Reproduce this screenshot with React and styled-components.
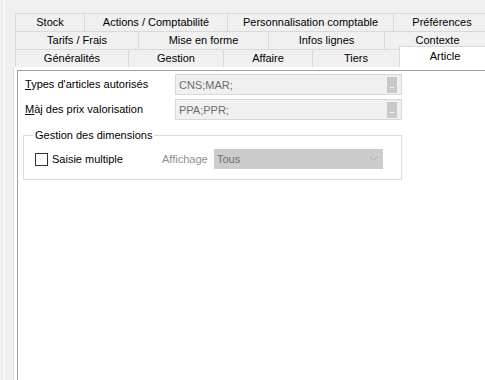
import React from "react";
import styled, { createGlobalStyle } from "styled-components";

const Global = createGlobalStyle`
  html, body { margin: 0; padding: 0; background: #f0f0f0; }
  body { font-family: "Liberation Sans", Arial, sans-serif; font-size: 11px; color: #000; }
`;

const Window = styled.div`
  width: 485px;
  height: 380px;
  overflow: hidden;
  background: #f0f0f0;
  display: flex;
  flex-direction: column;
  padding-top: 13px;
  box-sizing: border-box;
  border-left: 1px solid #f0f0f0;
  position: relative;
`;

const Splitter = styled.div`
  position: absolute;
  left: 3px;
  top: 0;
  bottom: 0;
  width: 1px;
  background: #fbfbfb;
`;

const TabStrip = styled.div`
  margin-left: 14px;
  width: 475px;
  display: flex;
  flex-direction: column;
`;

const TabRow = styled.div`
  display: flex;
  height: 18px;
  align-items: flex-end;
`;

const Tab = styled.div`
  box-sizing: border-box;
  flex: ${(p) => (p.$w ? `0 0 ${p.$w}px` : "1 1 auto")};
  height: ${(p) => (p.$selected ? "21px" : "18px")};
  margin-top: ${(p) => (p.$selected ? "-3px" : "0")};
  background: ${(p) => (p.$selected ? "#ffffff" : "#f0f0f0")};
  border-top: 1px solid #d9d9d9;
  border-left: 1px solid #d9d9d9;
  display: flex;
  align-items: ${(p) => (p.$selected ? "flex-start" : "center")};
  padding-top: ${(p) => (p.$selected ? "3px" : "0")};
  justify-content: center;
  white-space: nowrap;
  line-height: 13px;
  position: relative;
  z-index: ${(p) => (p.$selected ? 2 : 1)};
`;

const Page = styled.div`
  flex: 1;
  margin-left: 12px;
  border-left: 1px solid #dcdcdc;
  background: #ffffff;
  padding: 3px 0 0 3px;
  display: flex;
`;

const Panel = styled.div`
  flex: 1;
  border-top: 1px solid #a0a0a0;
  border-left: 1px solid #a0a0a0;
  background: #ffffff;
  padding: 3px 0 0 7px;
  display: flex;
  flex-direction: column;
  gap: 4px;
`;

const FieldRow = styled.div`
  display: grid;
  grid-template-columns: 150px 227px;
  height: 21px;
  align-items: center;
`;

const Label = styled.span`
  line-height: 13px;
  white-space: nowrap;
  u { text-decoration: underline; text-underline-offset: 1px; }
`;

const Input = styled.div`
  box-sizing: border-box;
  height: 21px;
  border: 1px solid #d7d7d7;
  background: #f0f0f0;
  color: #6d6d6d;
  display: flex;
  align-items: center;
  padding-left: 3px;
  padding-right: 4px;
`;

const EllipsisButton = styled.div`
  margin-left: auto;
  width: 10px;
  height: 16px;
  background: #c9c9c9;
  display: flex;
  align-items: flex-end;
  justify-content: center;
  padding-bottom: 5px;
  box-sizing: border-box;
  &::after {
    content: "";
    width: 4px;
    height: 1px;
    background: #f4f4f4;
  }
`;

const GroupBox = styled.div`
  position: relative;
  box-sizing: border-box;
  margin-top: 11px;
  margin-left: -2px;
  width: 379px;
  height: 45px;
  border: 1px solid #dcdcdc;
  padding: 13px 0 0 11px;
`;

const Legend = styled.span`
  position: absolute;
  top: -7px;
  left: 9px;
  padding: 0 2px;
  background: #ffffff;
  line-height: 13px;
  white-space: nowrap;
`;

const OptionsRow = styled.div`
  display: flex;
  align-items: center;
  height: 20px;
`;

const CheckBox = styled.div`
  box-sizing: border-box;
  width: 13px;
  height: 13px;
  border: 1px solid #333333;
  background: #ffffff;
  flex: 0 0 13px;
`;

const CheckLabel = styled.span`
  margin-left: 4px;
  width: 110px;
  white-space: nowrap;
`;

const DisabledLabel = styled.span`
  width: 52px;
  color: #8d8d8d;
  white-space: nowrap;
`;

const Select = styled.div`
  box-sizing: border-box;
  width: 169px;
  height: 20px;
  background: #cccccc;
  color: #6d6d6d;
  display: flex;
  align-items: center;
  padding: 0 5px 0 3px;
  svg { margin-left: auto; }
`;

const rows = [
  [
    { t: "Stock", w: 69 },
    { t: "Actions / Comptabilité", w: 143 },
    { t: "Personnalisation comptable", w: 166 },
    { t: "Préférences" },
  ],
  [
    { t: "Tarifs / Frais", w: 123 },
    { t: "Mise en forme", w: 130 },
    { t: "Infos lignes", w: 116 },
    { t: "Contexte" },
  ],
  [
    { t: "Généralités", w: 113 },
    { t: "Gestion", w: 95 },
    { t: "Affaire", w: 89 },
    { t: "Tiers", w: 87 },
    { t: "Article", selected: true },
  ],
];

export default function App() {
  return (
    <>
      <Global />
      <Window>
        <Splitter />
        <TabStrip>
          {rows.map((r, i) => (
            <TabRow key={i}>
              {r.map((tab) => (
                <Tab key={tab.t} $w={tab.w} $selected={tab.selected}>
                  {tab.t}
                </Tab>
              ))}
            </TabRow>
          ))}
        </TabStrip>
        <Page>
          <Panel>
            <FieldRow>
              <Label>
                <u>T</u>ypes d'articles autorisés
              </Label>
              <Input>
                CNS;MAR;
                <EllipsisButton />
              </Input>
            </FieldRow>
            <FieldRow>
              <Label>
                <u>M</u>àj des prix valorisation
              </Label>
              <Input>
                PPA;PPR;
                <EllipsisButton />
              </Input>
            </FieldRow>
            <GroupBox>
              <Legend>Gestion des dimensions</Legend>
              <OptionsRow>
                <CheckBox />
                <CheckLabel>Saisie multiple</CheckLabel>
                <DisabledLabel>Affichage</DisabledLabel>
                <Select>
                  Tous
                  <svg width="9" height="6" viewBox="0 0 9 6">
                    <path d="M0.5 0.5 L4.5 4.5 L8.5 0.5" fill="none" stroke="#a9a9a9" strokeWidth="1" />
                  </svg>
                </Select>
              </OptionsRow>
            </GroupBox>
          </Panel>
        </Page>
      </Window>
    </>
  );
}
